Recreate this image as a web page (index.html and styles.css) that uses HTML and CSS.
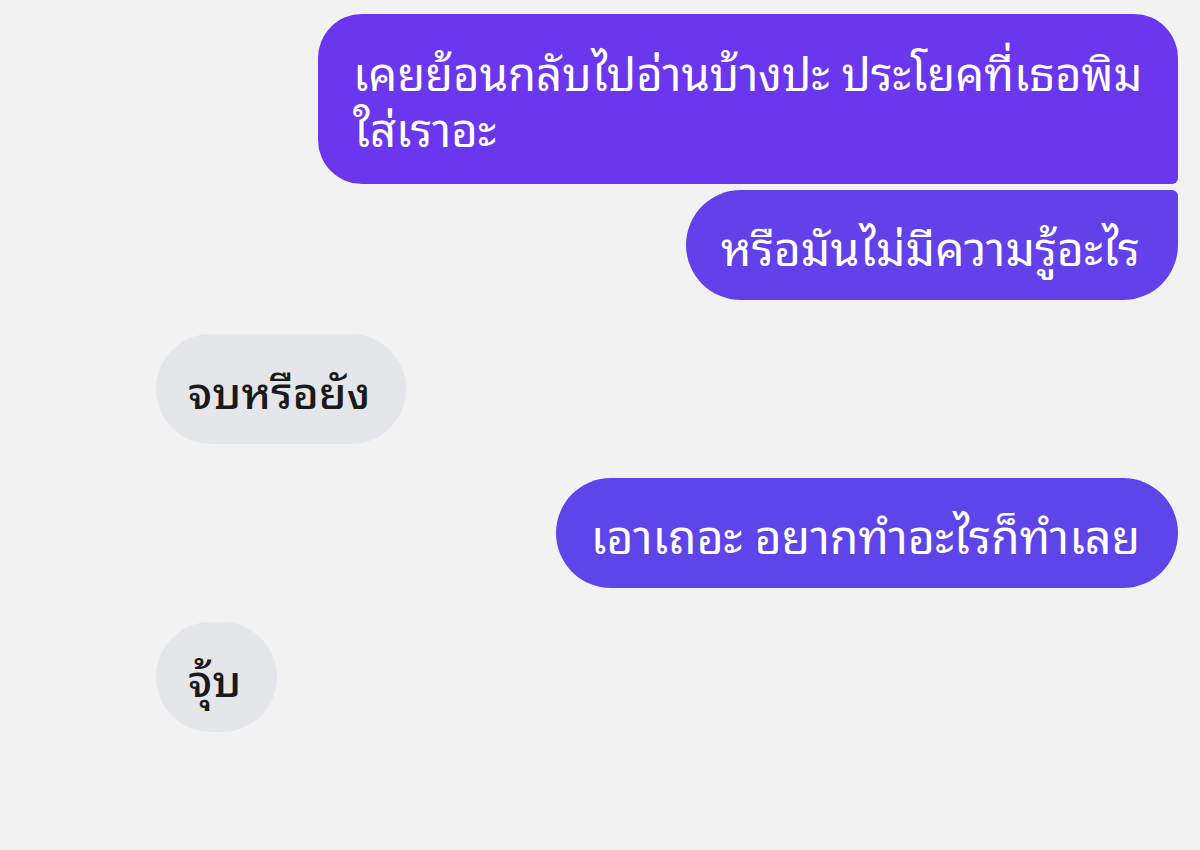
FILE: index.html
```html
<!DOCTYPE html>
<html lang="th">
<head>
<meta charset="utf-8">
<title>Chat</title>
<link rel="stylesheet" href="styles.css">
</head>
<body>
<main class="chat">
  <div class="row sent">
    <div class="bubble out first">เคยย้อนกลับไปอ่านบ้างปะ ประโยคที่เธอพิม<br>ใส่เราอะ</div>
  </div>
  <div class="row sent tight">
    <div class="bubble out last">หรือมันไม่มีความรู้อะไร</div>
  </div>
  <div class="row recv">
    <div class="bubble in">จบหรือยัง</div>
  </div>
  <div class="row sent">
    <div class="bubble out single">เอาเถอะ อยากทำอะไรก็ทำเลย</div>
  </div>
  <div class="row recv">
    <div class="bubble in">จุ้บ</div>
  </div>
</main>
</body>
</html>
```

FILE: styles.css
```css
html, body {
  margin: 0;
  padding: 0;
  background: #f2f2f2;
}
.chat {
  display: flex;
  flex-direction: column;
  gap: 34px;
  padding: 14px 22px 0 156px;
  font-family: "Noto Sans Thai Looped", "Loma", "Garuda", "Waree", "Tlwg Typo", "Sarabun", "Noto Sans Thai", sans-serif;
  font-size: 46.5px;
  line-height: 60px;
}
.row {
  display: flex;
}
.row.sent {
  justify-content: flex-end;
}
.row.tight {
  margin-top: -28px;
}
.row.recv {
  justify-content: flex-start;
}
.bubble {
  padding: 25px 38px 25px 35px;
  border-radius: 55px;
  box-sizing: border-box;
  white-space: nowrap;
}
.bubble.out {
  color: #ffffff;
  background: #6240ea;
}
.bubble.first {
  background: #6a36ee;
  border-radius: 44px 44px 6px 44px;
  width: 860px;
  font-size: 45.5px;
  line-height: 56px;
  padding-top: 29px;
  padding-bottom: 29px;
}
.bubble.last {
  border-radius: 55px 6px 55px 55px;
}
.bubble.single {
  background: #5e45ea;
}
.bubble.in {
  color: #1a1a1a;
  background: #e4e6e9;
  font-size: 44.5px;
  font-weight: 500;
  padding: 25px 36px 25px 32px;
}
```
